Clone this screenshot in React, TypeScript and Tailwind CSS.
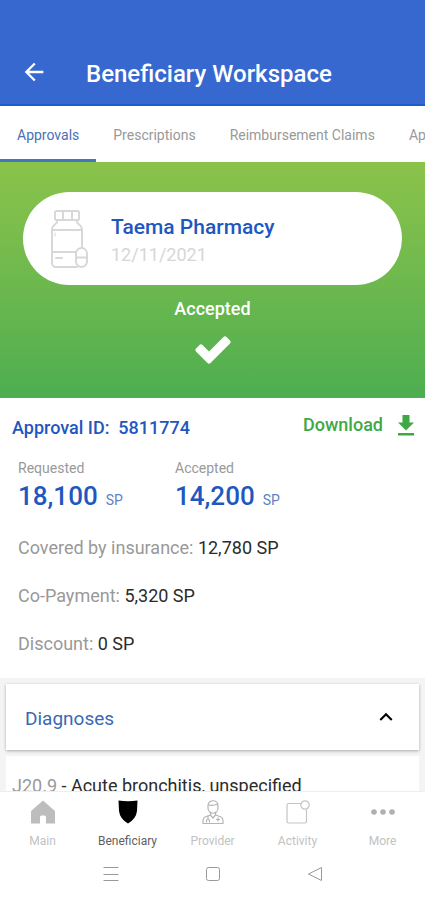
import React from "react";
import clsx from "clsx";
import { MdArrowBack, MdKeyboardArrowUp } from "react-icons/md";

interface AmountProps {
  label: string;
  value: string;
}

interface DetailProps {
  label: string;
  value: string;
}

interface NavItem {
  title: string;
  icon: React.ReactNode;
  active?: boolean;
}

const tabs = [
  "Approvals",
  "Prescriptions",
  "Reimbursement Claims",
  "Appointments",
];

const BottleIcon = () => (
  <svg
    width="38"
    height="58"
    viewBox="0 0 38 58"
    fill="none"
    stroke="#d8d8d8"
    strokeWidth="2"
    strokeLinecap="round"
    strokeLinejoin="round"
    aria-hidden="true"
  >
    <rect x="4" y="1" width="24" height="9" rx="1.5" />
    <path d="M12 1v9M21 1v9" />
    <path d="M6 10v2c0 2-5 3-5 7v34c0 2 1.500 4 4 4h21" />
    <path d="M26 10v2c0 2 5 3 5 7v19" />
    <path d="M1 20h30M1 42h24M5 48h6" />
    <path d="M4 23v3" strokeWidth="1" />
    <rect x="25" y="38" width="11" height="19" rx="5.500" />
    <path d="M25 47.500h11" />
  </svg>
);

const CheckIcon = () => (
  <svg width="36" height="28" viewBox="0 0 36 28" aria-hidden="true">
    <path
      d="M1 12.500 4.500 9q1.500-1.300 3 0l6.500 6.500L28.500 1q1.500-1.300 3 0L35 4.500q1.300 1.500 0 3L15.500 27q-1.500 1.300-3 0L1 15.500q-1.300-1.500 0-3Z"
      fill="#fff"
    />
  </svg>
);

const DownloadIcon = () => (
  <svg width="18" height="21" viewBox="0 0 18 21" fill="#3fa845" aria-hidden="true">
    <path d="M5.500 0h7v7.500H17L9 15.500 1 7.500h4.500zM1 18h16v2.500H1z" />
  </svg>
);

const HomeIcon = () => (
  <svg width="26" height="24" viewBox="0 0 26 24" fill="#bdbdbd" aria-hidden="true">
    <path d="M13 0.500 25 11v12.500h-9V17q0-1.500-1.500-1.500h-3Q10 15.500 10 17v6.500H1V11z" />
  </svg>
);

const ShieldIcon = () => (
  <svg width="20" height="24" viewBox="0 0 20 24" aria-hidden="true">
    <path
      d="M0.500 0.500q9.500 1.500 19 0L19 11q-1 8-9 12.500Q2 19 1 11z"
      fill="#000"
    />
  </svg>
);

const DoctorIcon = () => (
  <svg
    width="22"
    height="24"
    viewBox="0 0 22 24"
    fill="none"
    stroke="#b5b5b5"
    strokeWidth="1.200"
    strokeLinecap="round"
    strokeLinejoin="round"
    aria-hidden="true"
  >
    <path d="M6 6c0-7 10-7 10 0v2c0 7-10 7-10 0zM6 5q5 1 10-1" />
    <path d="M8.500 12v3L3 17q-2 1-2 4v2.500h20V21q0-3-2-4l-5.500-2v-3" />
    <path d="m8.500 15 2.500 3 2.500-3M6 16v3m-1.500 3q0-3 1.500-3t1.500 3M14.500 19.500h3M16 18v3" />
  </svg>
);

const ActivityIcon = () => (
  <svg
    width="24"
    height="24"
    viewBox="0 0 24 24"
    fill="none"
    stroke="#c4c4c4"
    strokeWidth="1.200"
    aria-hidden="true"
  >
    <path d="M15 3.500H2.500Q1 3.500 1 5v16.500Q1 23 2.500 23H19q1.500 0 1.500-1.500V9.500" />
    <circle cx="19" cy="5" r="4.200" />
  </svg>
);

const MoreIcon = () => (
  <svg width="24" height="24" viewBox="0 0 24 24" fill="#b0b0b0" aria-hidden="true">
    <circle cx="3" cy="12" r="2.800" />
    <circle cx="12" cy="12" r="2.800" />
    <circle cx="21" cy="12" r="2.800" />
  </svg>
);

const navItems: NavItem[] = [
  { title: "Main", icon: <HomeIcon /> },
  { title: "Beneficiary", icon: <ShieldIcon />, active: true },
  { title: "Provider", icon: <DoctorIcon /> },
  { title: "Activity", icon: <ActivityIcon /> },
  { title: "More", icon: <MoreIcon /> },
];

const Amount: React.FC<AmountProps> = ({ label, value }) => (
  <div className="w-[157px]">
    <p className="text-sm leading-5 text-[#999999]">{label}</p>
    <p className="flex items-baseline gap-2 text-[#1f57c0]">
      <span className="text-[26px] leading-9 font-medium">{value}</span>
      <span className="text-sm text-[#5c82c4]">SP</span>
    </p>
  </div>
);

const Detail: React.FC<DetailProps> = ({ label, value }) => (
  <p className="text-lg leading-6 text-[#999999]">
    {label}: <span className="text-[#2b2b2b]">{value}</span>
  </p>
);

const App: React.FC = () => {
  return (
    <div className="flex h-dvh flex-col overflow-hidden bg-white font-['Roboto',sans-serif]">
      <header className="flex-none border-b-2 border-[#1b5dcb] bg-[#3768cf] pt-10">
        <div className="flex h-16 items-center gap-[38px] px-5">
          <button type="button" aria-label="Back" className="text-white">
            <MdArrowBack size={28} />
          </button>
          <h1 className="pt-1 text-2xl font-medium text-white">
            Beneficiary Workspace
          </h1>
        </div>
      </header>

      <nav className="flex h-14 flex-none overflow-hidden bg-white">
        {tabs.map((tab, index) => (
          <a
            key={tab}
            href="#"
            className={clsx(
              "flex flex-none items-center border-b-3 px-[17px] pt-1 text-sm",
              index === 0
                ? "border-[#3f78bd] text-[#4a6fb5]"
                : "border-transparent text-[#999999]"
            )}
          >
            {tab}
          </a>
        ))}
      </nav>

      <main className="min-h-0 flex-1 overflow-hidden">
        <section className="flex h-[236px] flex-col items-center bg-linear-to-b from-[#8bc34a] to-[#4cae50] px-[23px] pt-[30px]">
          <div className="flex h-[93px] w-full items-center gap-[22px] rounded-full bg-white pl-7">
            <BottleIcon />
            <div className="pt-1">
              <h2 className="text-[21px] leading-7 font-medium text-[#1f57c0]">
                Taema Pharmacy
              </h2>
              <p className="text-lg leading-7 text-[#d6d6d6]">12/11/2021</p>
            </div>
          </div>
          <p className="mt-3 mb-[15px] text-lg leading-6 font-medium text-white">
            Accepted
          </p>
          <CheckIcon />
        </section>

        <section className="pb-[22px]">
          <div className="flex items-center justify-between pt-3 pr-[10px] pl-3">
            <p className="pt-[6px] text-lg leading-6 font-medium whitespace-pre text-[#1f57c0]">
              Approval ID:{"  "}5811774
            </p>
            <button
              type="button"
              className="flex items-center gap-[14px] text-lg leading-6 font-medium text-[#3fa845]"
            >
              Download
              <DownloadIcon />
            </button>
          </div>
          <div className="px-[18px] pt-[18px]">
            <div className="flex">
              <Amount label="Requested" value="18,100" />
              <Amount label="Accepted" value="14,200" />
            </div>
            <div className="flex flex-col gap-6 pt-[22px]">
              <Detail label="Covered by insurance" value="12,780 SP" />
              <Detail label="Co-Payment" value="5,320 SP" />
              <Detail label="Discount" value="0 SP" />
            </div>
          </div>
        </section>

        <section className="bg-[#f4f4f4] px-[6px] pt-[6px]">
          <button
            type="button"
            aria-expanded="true"
            className="flex h-[66px] w-full items-center justify-between bg-white pr-5 pl-[19px] shadow-[0_1px_3px_rgba(0,0,0,0.3)]"
          >
            <span className="pt-1 text-[19px] text-[#3a68b5]">Diagnoses</span>
            <MdKeyboardArrowUp size={26} className="text-black" />
          </button>
          <div className="mt-[6px] bg-white px-[6px] py-[18px]">
            <p className="text-lg leading-6 text-[#2b2b2b]">
              <span className="text-[#999999]">J20.9</span> - Acute bronchitis,
              unspecified
            </p>
          </div>
        </section>
      </main>

      <nav className="grid h-[65px] flex-none grid-cols-5 border-t border-[#eeeeee] bg-white pt-2">
        {navItems.map(item => (
          <a
            key={item.title}
            href="#"
            className={clsx(
              "flex flex-col items-center gap-[9px] text-xs",
              item.active ? "text-[#5f5f5f]" : "text-[#c2c2c2]"
            )}
          >
            {item.icon}
            {item.title}
          </a>
        ))}
      </nav>

      <div className="flex h-11 flex-none justify-center gap-[86px] bg-white pt-[10px]">
        <button type="button" aria-label="Recent apps" className="h-4 w-4">
          <svg width="16" height="16" viewBox="0 0 16 16" stroke="#999" strokeWidth="1.200">
            <path d="M0.500 1.500h15M0.500 8.500h15M0.500 14.500h15" />
          </svg>
        </button>
        <button type="button" aria-label="Home" className="h-4 w-4">
          <svg width="16" height="16" viewBox="0 0 16 16" fill="none" stroke="#999">
            <rect x="1.500" y="1.500" width="13" height="13" rx="2" />
          </svg>
        </button>
        <button type="button" aria-label="Back" className="h-4 w-4">
          <svg width="16" height="16" viewBox="0 0 16 16" fill="none" stroke="#999" strokeLinejoin="round">
            <path d="M14.500 1.500v13L1.500 8z" />
          </svg>
        </button>
      </div>
    </div>
  );
};

export default App;
